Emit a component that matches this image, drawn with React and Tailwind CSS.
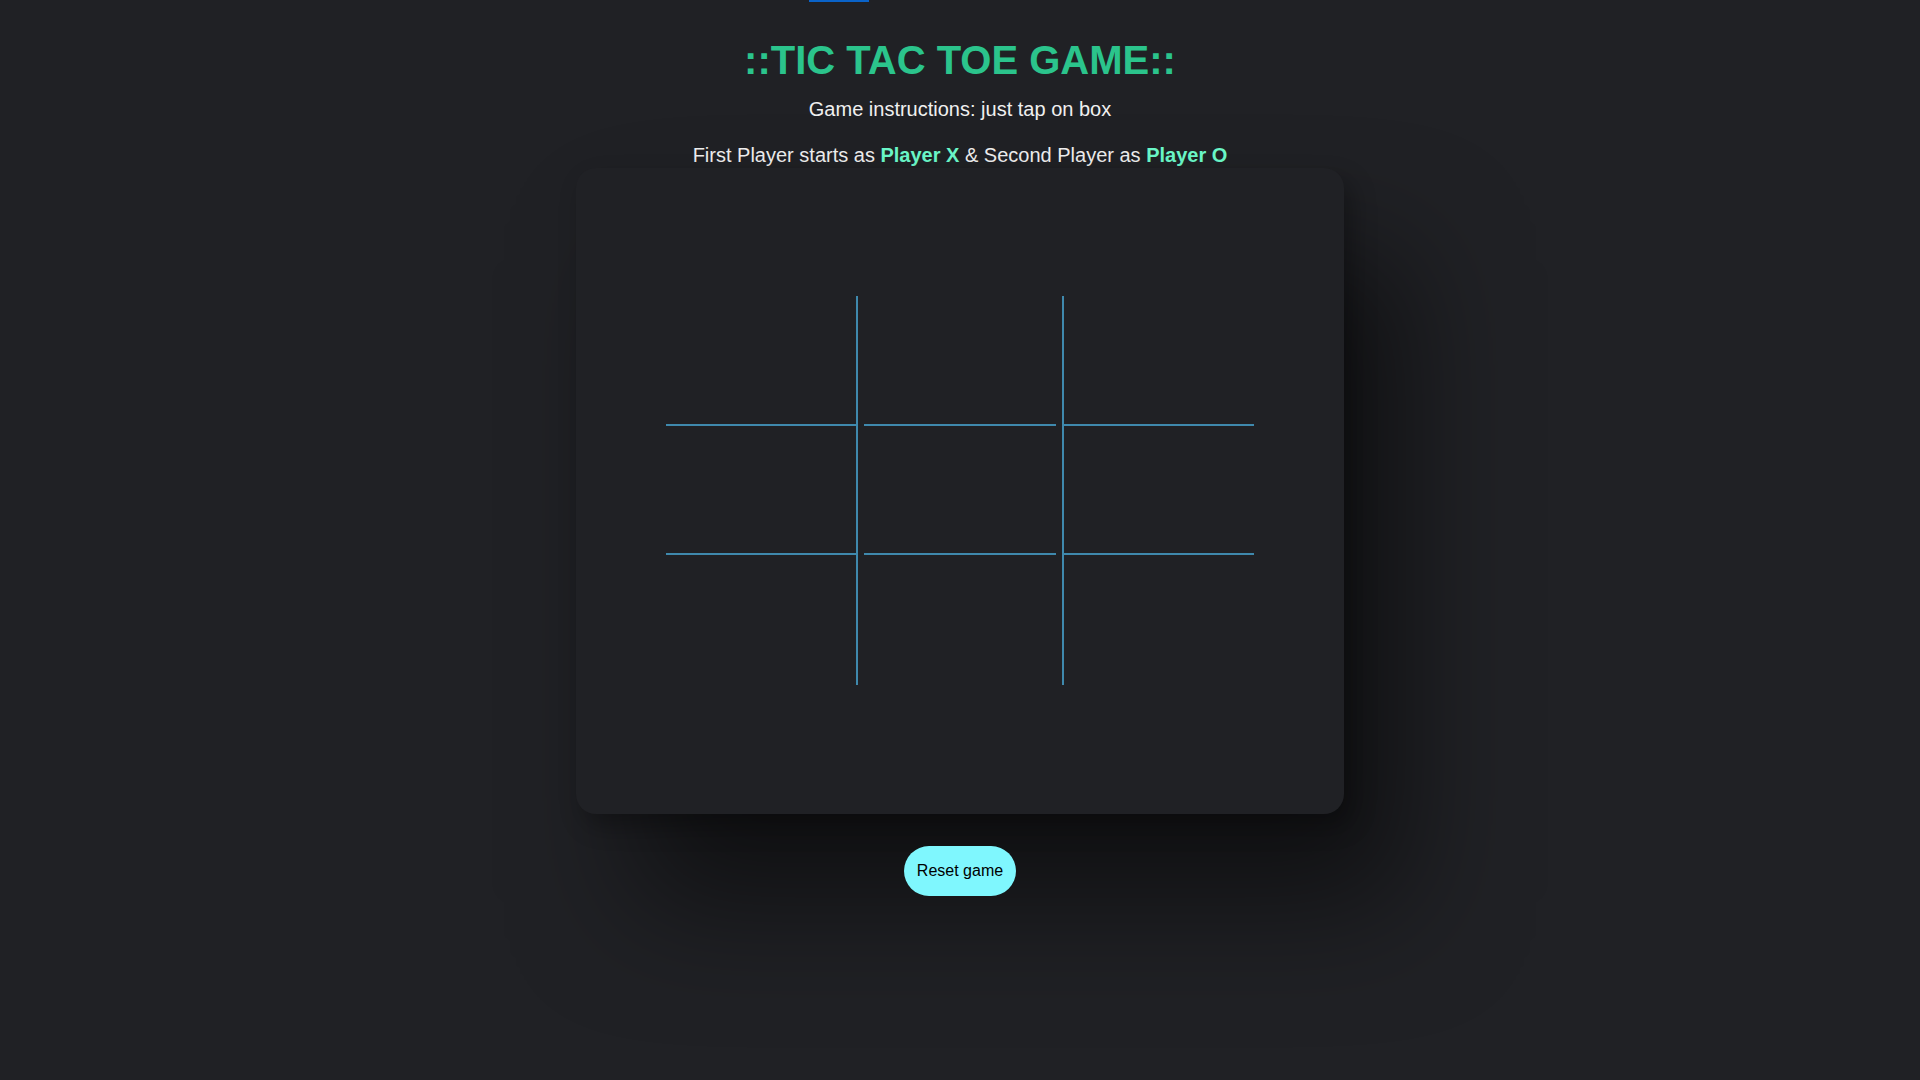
export default function App() {
  const cells = [];
  for (let r = 0; r < 3; r++) {
    for (let c = 0; c < 3; c++) {
      const cls = [
        "w-[192px] border-[#3f89ad]",
        r === 1 ? "h-[129px]" : "h-[130px]",
        c === 0 ? "border-r-2" : "",
        c === 2 ? "border-l-2" : "",
        r < 2 ? "border-b-2" : "",
      ].join(" ");
      cells.push(<div key={`${r}-${c}`} className={cls} />);
    }
  }
  return (
    <div className="min-h-screen w-full bg-[#202125] font-['Liberation_Sans',Arial,sans-serif] overflow-hidden">
      <div className="ml-[809px] h-[2px] w-[60px] bg-[#0a63c9]" />
      <div className="flex flex-col items-center">
        <h1 className="mt-[35px] text-[40px] leading-[46px] font-bold text-[#2bc48c]">::TIC TAC TOE GAME::</h1>
        <p className="mt-[15px] text-[20px] leading-[23px] text-[#f0f0f0]">Game instructions: just tap on box</p>
        <p className="mt-[23px] text-[20px] leading-[23px] text-[#f0f0f0]">
          First Player starts as <b className="text-[#6cfacb]">Player X</b> &amp; Second Player as{" "}
          <b className="text-[#6cfacb]">Player O</b>
        </p>
        <div className="mt-px flex h-[646px] w-[768px] flex-col items-center pt-[128px] rounded-[20px] bg-[#202125] shadow-[8px_12px_24px_rgba(0,0,0,0.3),60px_90px_120px_rgba(0,0,0,0.5)]">
          <div className="grid grid-cols-[192px_192px_192px] gap-x-[6px]">{cells}</div>
        </div>
        <button className="mt-[32px] h-[50px] rounded-full bg-[#7ff7fe] px-[13px] text-[16px] text-black">
          Reset game
        </button>
      </div>
    </div>
  );
}
